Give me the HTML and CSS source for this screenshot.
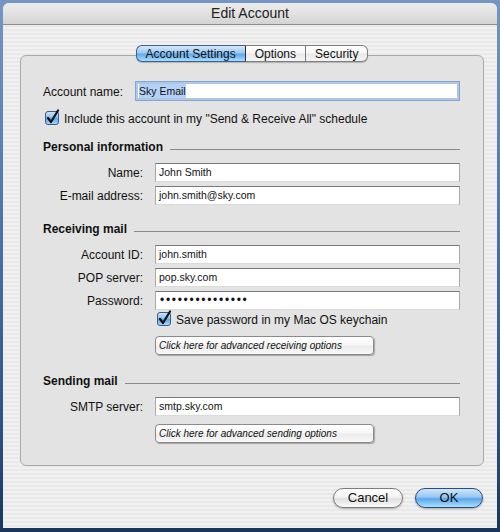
FILE: index.html
```html
<!DOCTYPE html>
<html>
<head>
<meta charset="utf-8">
<link rel="stylesheet" href="styles.css">
</head>
<body>
<div class="window">
  <div class="titlebar">Edit Account</div>
  <div class="content">
    <div class="tabs">
      <span class="tab active">Account Settings</span>
      <span class="tab">Options</span>
      <span class="tab">Security</span>
    </div>
    <div class="group">
      <div class="acct-row">
        <span class="acct-label">Account name:</span>
        <div class="field focus"><span class="sel">Sky Email</span></div>
      </div>
      <div class="check-row">
        <svg class="cb" width="17" height="17" viewBox="0 0 17 17">
          <defs>
            <linearGradient id="cbg" x1="0" y1="0" x2="0" y2="1">
              <stop offset="0" stop-color="#d3e6fa"/>
              <stop offset="0.45" stop-color="#8fc2f3"/>
              <stop offset="0.55" stop-color="#5ea6ec"/>
              <stop offset="1" stop-color="#a9dffc"/>
            </linearGradient>
          </defs>
          <rect x="1.5" y="2.5" width="13" height="13" rx="2.5" fill="url(#cbg)" stroke="#3b5d8c"/>
          <path d="M4 9 L7 13 L14 1.5" fill="none" stroke="#111" stroke-width="2.2" stroke-linecap="round" stroke-linejoin="round"/>
        </svg>
        <span>Include this account in my "Send &amp; Receive All" schedule</span>
      </div>

      <div class="heading heading-first"><span>Personal information</span><i class="rule"></i></div>
      <div class="form">
        <span class="lbl">Name:</span><div class="field">John Smith</div>
        <span class="lbl">E-mail address:</span><div class="field">john.smith@sky.com</div>
      </div>

      <div class="heading heading-mid"><span>Receiving mail</span><i class="rule"></i></div>
      <div class="form">
        <span class="lbl">Account ID:</span><div class="field">john.smith</div>
        <span class="lbl">POP server:</span><div class="field">pop.sky.com</div>
        <span class="lbl">Password:</span><div class="field dots">•••••••••••••••</div>
      </div>
      <div class="check-row indented">
        <svg class="cb" width="17" height="17" viewBox="0 0 17 17">
          <rect x="1.5" y="2.5" width="13" height="13" rx="2.5" fill="url(#cbg)" stroke="#3b5d8c"/>
          <path d="M4 9 L7 13 L14 1.5" fill="none" stroke="#111" stroke-width="2.2" stroke-linecap="round" stroke-linejoin="round"/>
        </svg>
        <span>Save password in my Mac OS keychain</span>
      </div>
      <div class="adv adv-recv">Click here for advanced receiving options</div>

      <div class="heading heading-send"><span>Sending mail</span><i class="rule"></i></div>
      <div class="form">
        <span class="lbl">SMTP server:</span><div class="field">smtp.sky.com</div>
      </div>
      <div class="adv adv-send">Click here for advanced sending options</div>
    </div>
    <div class="buttons">
      <div class="pill cancel">Cancel</div>
      <div class="pill ok">OK</div>
    </div>
  </div>
</div>
</body>
</html>
```

FILE: styles.css
```css
html, body {
  margin: 0;
  padding: 0;
}

body {
  width: 500px;
  height: 532px;
  box-sizing: border-box;
  padding: 3px 3px 4px 3px;
  background: linear-gradient(to bottom, #7596c2 0%, #4a72a8 45%, #2d5286 80%, #1b355c 100%);
  font-family: "Liberation Sans", Arial, sans-serif;
  font-size: 12px;
  color: #111;
  overflow: hidden;
}

.window {
  height: 525px;
  border-radius: 6px 6px 0 0;
  overflow: hidden;
  background: repeating-linear-gradient(to bottom, #f1f1f1 0px, #f1f1f1 2px, #e9e9e9 2px, #e9e9e9 4px);
}

.titlebar {
  height: 21px;
  line-height: 21px;
  border-bottom: 1px solid #8e8e8e;
  background: linear-gradient(to bottom, #ececec 0%, #e2e2e2 50%, #d3d3d3 100%);
  text-align: center;
  font-size: 14px;
  color: #222;
}

.content {
  padding: 20px 13px 0 17px;
}

.tabs {
  display: flex;
  justify-content: center;
  height: 17px;
  position: relative;
  z-index: 1;
}

.tab {
  height: 17px;
  box-sizing: border-box;
  line-height: 16px;
  padding: 0 9px;
  border: 1px solid #7e7e7e;
  border-left: none;
  background: linear-gradient(to bottom, #ffffff 0%, #f6f6f6 48%, #e9e9e9 52%, #f5f5f5 100%);
  font-size: 12px;
  color: #111;
  box-shadow: 0 1px 1px rgba(0,0,0,0.2);
}

.tab:first-child {
  border-left: 1px solid #3f5f8e;
  border-radius: 6px 0 0 6px;
}

.tab:last-child {
  border-radius: 0 6px 6px 0;
}

.tab.active {
  padding: 0 9px 0 9px;
  border-color: #3f5f8e;
  border-right-color: #2d2d2d;
  background: linear-gradient(to bottom, #d5e8fb 0%, #9ccaf5 45%, #62aaee 55%, #a6defd 100%);
}

.group {
  margin-top: -7px;
  height: 411px;
  box-sizing: border-box;
  border: 1px solid #a9a9a9;
  border-radius: 6px;
  background: #e3e3e3;
  padding: 25px 23px 0 22px;
}

.acct-row {
  display: flex;
  align-items: center;
  height: 20px;
}

.acct-label {
  width: 92px;
  flex: none;
  padding-top: 2px;
}

.field {
  height: 19px;
  box-sizing: border-box;
  background: #fff;
  border-top: 1px solid #7a7a7a;
  border-left: 1px solid #a8a8a8;
  border-right: 1px solid #a8a8a8;
  border-bottom: 1px solid #dadada;
  font-size: 10.5px;
  line-height: 17px;
  padding-left: 3px;
  color: #111;
  white-space: nowrap;
  overflow: hidden;
}

.field.focus {
  flex: 1;
  height: 20px;
  border: 1px solid #86a6d2;
  box-shadow: inset 0 0 0 2px #aec7e8;
  padding-left: 3px;
  line-height: 18px;
}

.sel {
  background: #b4d2f8;
  padding: 1px 0;
}

.field.dots {
  font-size: 12px;
  letter-spacing: 1.7px;
  padding-left: 4px;
  line-height: 16px;
}

.check-row {
  display: flex;
  align-items: center;
  height: 16px;
  margin-top: 9px;
  padding-left: 1px;
}

.check-row .cb {
  flex: none;
  margin-top: -2px;
}

.check-row span {
  margin-left: 3px;
  padding-top: 2px;
}

.check-row.indented {
  margin-top: 1px;
  padding-left: 113px;
}

.heading {
  display: flex;
  align-items: center;
  height: 14px;
  font-weight: bold;
  gap: 7px;
}

.heading-first { margin-top: 14px; }
.heading-mid { margin-top: 17px; }
.heading-send { margin-top: 19px; }

.heading + .form { margin-top: 9px; }

.rule {
  flex: 1;
  height: 1px;
  background: #8a8a8a;
  margin-top: 4px;
}

.form {
  display: grid;
  grid-template-columns: 100px 1fr;
  column-gap: 12px;
  row-gap: 4px;
  margin-top: 10px;
}

.lbl {
  text-align: right;
  line-height: 17px;
  padding-top: 2px;
  white-space: nowrap;
}

.adv {
  width: 219px;
  height: 19px;
  box-sizing: border-box;
  margin-left: 112px;
  border: 1px solid #8a8a8a;
  border-radius: 4px;
  background: linear-gradient(to bottom, #ffffff 0%, #f7f7f7 48%, #ebebeb 52%, #f8f8f8 100%);
  box-shadow: 1px 1px 1px rgba(0,0,0,0.28);
  font-size: 10px;
  font-style: italic;
  line-height: 17px;
  padding-left: 3px;
  color: #111;
}

.adv-recv { margin-top: 9px; }
.adv-send { margin-top: 8px; }

.buttons {
  display: flex;
  justify-content: flex-end;
  gap: 12px;
  margin-top: 22px;
  padding-right: 1px;
}

.pill {
  height: 20px;
  box-sizing: border-box;
  border-radius: 10px;
  text-align: center;
  line-height: 18px;
  font-size: 13px;
  color: #111;
  box-shadow: 0 1px 2px rgba(0,0,0,0.3);
}

.cancel {
  width: 70px;
  border: 1px solid #7c7c7c;
  background: linear-gradient(to bottom, #ffffff 0%, #f4f4f4 45%, #e0e0e0 55%, #fafafa 100%);
}

.ok {
  width: 68px;
  border: 1px solid #2b4c82;
  background: linear-gradient(to bottom, #d0e6fb 0%, #94c6f4 45%, #5ba6ec 55%, #abe2fd 100%);
}
```
